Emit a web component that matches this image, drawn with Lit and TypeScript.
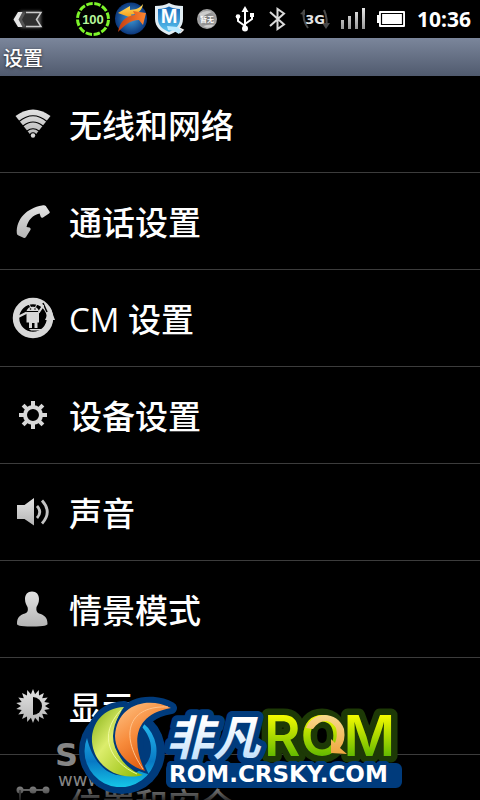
import { LitElement, html, css, svg, TemplateResult } from "lit";
import { customElement } from "lit/decorators.js";

interface Entry {
  label: string;
  icon: TemplateResult;
}

const gearTeeth = [0, 45, 90, 135, 180, 225, 270, 315];

const sunPoints = Array.from({ length: 36 }, (_, i) => {
  const r = i % 2 ? 12 : 17;
  const a = (i * Math.PI) / 18;
  return `${(24 + r * Math.sin(a)).toFixed(2)},${(24 - r * Math.cos(a)).toFixed(2)}`;
}).join(" ");

const entries: Entry[] = [
  {
    label: "无线和网络",
    icon: svg`
      <path d="M6.500 16Q24 3 41.500 16L24 38Z" fill="url(#g)"/>
      <g fill="none" stroke="#000" stroke-width="1.200">
        <path d="M10 21.500Q24 10 38 21.500"/><path d="M14 26Q24 18 34 26"/><path d="M18 31Q24 26.500 30 31"/>
      </g>
      <circle cx="24" cy="35.500" r="3.200" fill="#000"/><circle cx="24" cy="35.500" r="2.200" fill="#d8d8d8"/>`,
  },
  {
    label: "通话设置",
    icon: svg`<path d="M33 8.500C35 8 36 8.200 36.800 9L40.500 14.500C41 15.500 40.800 16 40 16.500L34 20.500C33 21 32 20.600 31.700 19.700L30.600 16.500C24 18 19 23 17.500 30L20.500 30.500C21.500 31 21.900 31.800 21.500 32.800L17 40C16.300 41 15.500 41.200 14.500 40.800L9.500 38.500C8.500 38 8 37.500 7.800 36C7 22 18 11 33 8.500Z" fill="url(#g)"/>`,
  },
  {
    label: "CM 设置",
    icon: svg`
      <circle cx="24" cy="24" r="17" fill="none" stroke="#d8d8d8" stroke-width="6.500"/>
      <path d="M36 26L41.500 14L46 26Z" fill="#d8d8d8"/>
      <path d="M34 9L38 18" stroke="#000" stroke-width="1.500"/>
      <g fill="#d8d8d8">
        <path d="M17.500 17A6.500 6 0 0 1 30 17Z"/>
        <path d="M17.500 18H30V28.500H28.500V34H25.500V29H23V34H20V28.500H17.500Z"/>
        <path d="M20 35H36L34 36.500H22Z"/>
      </g>
      <g stroke="#d8d8d8" stroke-width="2.200" stroke-linecap="round"><path d="M17 19L9 23M30 18L34 12"/></g>
      <path d="M20 10L21.500 13M28 10L26.500 13" stroke="#d8d8d8"/>
      <circle cx="21.500" cy="15" r=".800"/><circle cx="26" cy="15" r=".800"/>`,
  },
  {
    label: "设备设置",
    icon: svg`
      <circle cx="24" cy="24" r="8" fill="none" stroke="#d8d8d8" stroke-width="4"/>
      ${gearTeeth.map((a) => svg`<path d="M22 10H26V16H22Z" fill="#d8d8d8" transform=${`rotate(${a} 24 24)`}/>`)}`,
  },
  {
    label: "声音",
    icon: svg`
      <path d="M8 17H15.500L25 10V37.500L15.500 31H8Z" fill="url(#g)"/>
      <g fill="none" stroke="#c4c4c4" stroke-width="2.800"><path d="M28 18Q33.500 24 28 30"/><path d="M33 12.500Q43.500 24 33 35.500"/></g>`,
  },
  {
    label: "情景模式",
    icon: svg`<path d="M23 6.500C27.500 6.500 30 9.500 30 14C30 18 28.500 20 27.500 22C27 25 27.500 27.500 30 28.500C35 30 38.500 32 38.500 39C38.500 40 36 41.500 23 41.500C10 41.500 8 40 8 39C8 32 11 30 16 28.500C19 27.500 19.300 25 18.500 22C17.500 20 16 18 16 14C16 9.500 18.500 6.500 23 6.500Z" fill="url(#g)"/>`,
  },
  {
    label: "显示",
    icon: svg`
      <polygon points=${sunPoints} fill="url(#g)"/>
      <path d="M24 15A9 9 0 0 1 24 33Z" fill="#000"/>`,
  },
  {
    label: "位置和安全",
    icon: svg`
      <path d="M11 11H38" stroke="#ddd" stroke-width="2"/>
      <circle cx="11" cy="11" r="3.500" fill="#eee"/><circle cx="24" cy="11" r="3.500" fill="#eee"/><circle cx="37" cy="11" r="3.500" fill="#eee"/>
      <path d="M11 11V37H37" fill="none" stroke="#999" stroke-width="2"/>`,
  },
];

@customElement("status-bar")
class StatusBar extends LitElement {
  static styles = css`
    :host { display: flex; align-items: center; height: 38px; background: #000; color: #fff; }
    svg { display: block; width: 38px; height: 38px; flex: none; }
    .back { border: 0; padding: 0; margin-left: 8px; margin-right: 28px; background: none; }
    .push { margin-left: auto; }
    .narrow { width: 28px; }
    .clock { width: 63px; padding-left: 7px; font: 700 21px/38px "Noto Sans", "Open Sans", sans-serif; }
    .count { font: 700 13px "Liberation Sans", sans-serif; fill: #b6f59a; }
    .badge { font: 700 20px "Liberation Sans", sans-serif; fill: #fff; }
    .weather { font: 700 7px "Noto Sans CJK SC", sans-serif; fill: #fff; }
    .net { font: 700 13px "DejaVu Sans", sans-serif; fill: #e4e4e4; }
  `;
  render() {
    return html`
      <button class="back" aria-label="返回">
        <svg viewBox="0 0 38 38">
          <defs><filter id="b" x="-30%" y="-30%" width="160%" height="160%"><feGaussianBlur stdDeviation="1.500"/></filter></defs>
          <path d="M13 11H33V28H13L6 19.500Z" fill="#555" filter="url(#b)"/>
          <path d="M18 12H33L28.500 19.500L33 27H18L14 19.500Z" fill="#303030"/>
          <path d="M18 12.500H33L28.500 19.500L33 26.500H18" fill="none" stroke="#ccc" stroke-width="1.500"/>
          <path d="M10 12H14.500L10.500 19.500L14.500 27H10L5.500 19.500Z" fill="#e6e6e6"/>
        </svg>
      </button>
      <svg viewBox="0 0 38 38">
        <circle cx="19" cy="19" r="15.500" fill="none" stroke="#7df52a" stroke-width="3" stroke-dasharray="6.500 1.617" transform="rotate(3 19 19)"/>
        <text class="count" x="19" y="24" text-anchor="middle">100</text>
      </svg>
      <svg viewBox="0 0 38 38">
        <defs>
          <radialGradient id="o"><stop offset="0" stop-color="#3f9ad8"/><stop offset="1" stop-color="#0b377c"/></radialGradient>
          <linearGradient id="y" x2="0" y2="1"><stop stop-color="#ffe26a"/><stop offset="1" stop-color="#f59a12"/></linearGradient>
          <linearGradient id="r" x2="1" y2="0"><stop stop-color="#c33c12"/><stop offset="1" stop-color="#ff8730"/></linearGradient>
        </defs>
        <circle cx="19" cy="18.500" r="16" fill="url(#o)"/>
        <path d="M31 4C27 9 23 9.500 18 10L18 6L6 13L20 18L19 14.500C27 14 30 10 31 4Z" fill="url(#y)"/>
        <path d="M6 32C8 21 14 16 23 15L21 11L34 13L31 25L27 20C18 20 13 25 6 32Z" fill="url(#r)"/>
      </svg>
      <svg viewBox="0 0 38 38">
        <defs><linearGradient id="s" x2="0" y2="1"><stop stop-color="#1668b8"/><stop offset="1" stop-color="#5cc5f0"/></linearGradient></defs>
        <path d="M5 6Q14 6 19 3Q24 6 33 6V19C33 27 27 32 19 35C11 32 5 27 5 19Z" fill="#e2edf3"/>
        <path d="M8 9Q15 8.500 19 6.500Q23 8.500 30 9V19C30 25 26 29 19 32C12 29 8 25 8 19Z" fill="url(#s)"/>
        <text class="badge" x="19" y="23" text-anchor="middle">M</text>
        <path d="M17 26L27 27L32 30L29 34L24 31L18 30Z" fill="#bceaff"/><path d="M29 28L33 30L30 33" fill="none" stroke="#eee" stroke-width="1.500"/>
      </svg>
      <svg viewBox="0 0 38 38">
        <defs><radialGradient id="m"><stop offset="0" stop-color="#777"/><stop offset="1" stop-color="#a5a5a5"/></radialGradient></defs>
        <circle cx="19" cy="19" r="10" fill="url(#m)"/><path d="M11 14Q17 9 24 12Q18 14 13 18ZM15 26Q21 24 26 25Q21 30 15 26Z" fill="#ccc"/>
        <text class="weather" x="19" y="22" text-anchor="middle">暂无</text>
      </svg>
      <svg class="push narrow" viewBox="0 0 28 38">
        <g fill="none" stroke="#fff" stroke-width="2"><path d="M15 10V29M15 26L8 21V17M15 24L22 19V15"/></g>
        <path d="M15 6L18.500 12H11.500Z" fill="#fff"/><circle cx="15" cy="28.500" r="3" fill="#fff"/><circle cx="8" cy="16.500" r="2.300" fill="#fff"/><path d="M20 13H24V17H20Z" fill="#fff"/>
      </svg>
      <svg viewBox="0 0 38 38"><path d="M12 12L26 24.500L19.500 29V9L26 13.500L12 26" fill="none" stroke="#d9d9d9" stroke-width="2"/></svg>
      <svg viewBox="0 0 38 38">
        <path d="M8 10Q6 20 12 28M28 10Q32 19 30 27" fill="none" stroke="#4a4a4a" stroke-width="2"/>
        <path d="M4 14L9 9V15ZM26 23H34L30 29Z" fill="#4a4a4a"/>
        <text class="net" x="19" y="24" text-anchor="middle">3G</text>
      </svg>
      <svg viewBox="0 0 38 38">
        <defs><linearGradient id="l" x2="0" y2="1"><stop stop-color="#e8e8e8"/><stop offset="1" stop-color="#999"/></linearGradient></defs>
        <path d="M7 20H10V29H7ZM14 16H17V29H14ZM21 12H24V29H21ZM28 8H31V29H28Z" fill="url(#l)"/>
      </svg>
      <svg viewBox="0 0 38 38">
        <path d="M8 11H32Q33 11 33 12V26Q33 27 32 27H8Q7 27 7 26V23H5V15H7V12Q7 11 8 11Z" fill="#fff"/>
        <path d="M9.500 13.500H30.500V24.500H9.500Z" fill="#fff" stroke="#000" stroke-width="1.200"/>
      </svg>
      <time class="clock">10:36</time>
    `;
  }
}

@customElement("setting-row")
class SettingRow extends LitElement {
  static properties = { label: {}, icon: { attribute: false } };
  declare label: string;
  declare icon: TemplateResult;
  static styles = css`
    :host { display: block; border-bottom: 1px solid #3c3c3c; }
    .row {
      display: flex; align-items: center; gap: 12px; width: 100%; height: 96px; margin: 0; padding: 0 9px;
      border: 0; background: none; color: #fff; text-align: left;
      font: 500 33px/48px "Open Sans", "Noto Sans CJK SC", sans-serif;
    }
    .icon { width: 48px; height: 48px; flex: none; }
    .label { padding-top: 4px; }
  `;
  render() {
    return html`<button class="row">
      <svg class="icon" viewBox="0 0 48 48" aria-hidden="true">
        <defs><linearGradient id="g" x2="0" y2="1"><stop stop-color="#e4e4e4"/><stop offset="1" stop-color="#b4b4b4"/></linearGradient></defs>
        ${this.icon}
      </svg>
      <span class="label">${this.label}</span>
    </button>`;
  }
}

@customElement("site-logo")
class SiteLogo extends LitElement {
  static styles = css`
    :host { display: block; }
    svg { display: block; }
    .stamp { font: 700 32px "DejaVu Sans", sans-serif; fill: #858585; }
    .stamp-url { font: 400 18px "DejaVu Sans", sans-serif; fill: #858585; }
    .art { paint-order: stroke; stroke-linejoin: round; }
    .cn { font: italic 700 47px "Noto Sans CJK SC", sans-serif; stroke: #003b7c; stroke-width: 12px; }
    .rom { font: 600 56px Inter, sans-serif; stroke: #1d3906; stroke-width: 13px; }
    .url { font: 700 23px "DejaVu Sans", sans-serif; stroke: #003b7c; stroke-width: 8px; }
    .navy { fill: #003b7c; stroke: #003b7c; stroke-width: 12px; stroke-linejoin: round; }
  `;
  render() {
    const green = "M124 707C102 708 91 725 92 742C94 765 117 782 143 775C117 767 104 735 124 707Z";
    const orange = "M171 708C148 696 117 704 115 736C115 752 128 766 145 771C136 752 126 716 171 708Z";
    return html`<svg width="352" height="112" viewBox="54 688 352 112" role="img" aria-label="非凡ROM">
      <defs>
        <linearGradient id="gr" x2="1" y2="1"><stop stop-color="#7fac10"/><stop offset=".4" stop-color="#dced6c"/><stop offset="1" stop-color="#8db900"/></linearGradient>
        <linearGradient id="or" x2=".6" y2="1"><stop stop-color="#ffc78a"/><stop offset=".5" stop-color="#f78b3b"/><stop offset="1" stop-color="#d85208"/></linearGradient>
        <linearGradient id="cy" x2="0" y2="1"><stop stop-color="#25b9ee"/><stop offset=".6" stop-color="#0879c4"/><stop offset="1" stop-color="#15c6e8"/></linearGradient>
        <linearGradient id="wh" x2="0" y2="1"><stop offset=".3" stop-color="#fff"/><stop offset="1" stop-color="#b4dafa"/></linearGradient>
        <linearGradient id="li" x2="0" y2="1"><stop offset=".2" stop-color="#f3fa00"/><stop offset=".8" stop-color="#62b800"/></linearGradient>
        <linearGradient id="go" x2="0" y2="1"><stop stop-color="#f8d98c"/><stop offset="1" stop-color="#f0a640"/></linearGradient>
      </defs>
      <text class="stamp" x="55" y="766">S</text>
      <text class="stamp-url" x="58" y="786">www.</text>
      <circle cx="122" cy="751" r="43" fill="#003b7c"/>
      <path class="navy" d=${green}/><path class="navy" d=${orange}/>
      <path d="M87 738A36 36 0 1 0 143 723L141 726C155 740 155 762 137 772C115 783 94 768 87 738Z" fill="url(#cy)"/>
      <path d=${green} fill="url(#gr)"/>
      <path d="M121 710C97 735 110 762 137 774" fill="none" stroke="#eefa9c" stroke-width="1"/>
      <path d=${orange} fill="url(#or)" stroke="#003b7c" stroke-width="4" paint-order="stroke"/>
      <path d="M168 707C130 705 118 733 143 769" fill="none" stroke="#ffc48d" stroke-width="1"/>
      <path class="navy" d="M172 769H396V782H172Z"/>
      <text class="art rom" x="264" y="756" fill="url(#li)">ROM</text>
      <path d="M306 728C313 710 338 711 344 729Q346 741 340 748L347 754L331 753L331 739L335 743Q338 736 336 728C330 718 320 719 313 729Z" fill="url(#go)"/>
      <text class="art cn" x="166" y="755" fill="url(#wh)">非凡</text>
      <text class="art url" x="169" y="782" fill="#fff">ROM.CRSKY.COM</text>
    </svg>`;
  }
}

@customElement("app-root")
class AppRoot extends LitElement {
  static styles = css`
    :host {
      display: flex; flex-direction: column; position: relative; height: 100vh; overflow: hidden;
      background: #000; color: #fff; font-family: "Noto Sans", "Noto Sans CJK SC", sans-serif;
    }
    .title {
      flex: none; height: 38px; margin: 0; padding: 0 3px; box-sizing: border-box;
      font: 500 20px/40px "Noto Sans CJK SC", sans-serif; text-shadow: 0 1px 3px #222;
      background: linear-gradient(#7b869b, #505a6e);
    }
    .list { flex: 1; min-height: 0; overflow: hidden; margin: 0; padding: 0; list-style: none; }
    .fade { position: absolute; left: 0; right: 0; bottom: 0; height: 32px; background: linear-gradient(transparent, #000000d0); }
    .logo { position: absolute; left: 54px; bottom: 0; }
  `;
  render() {
    return html`
      <status-bar></status-bar>
      <h1 class="title">设置</h1>
      <ul class="list">
        ${entries.map((e) => html`<li><setting-row .label=${e.label} .icon=${e.icon}></setting-row></li>`)}
      </ul>
      <div class="fade"></div>
      <site-logo class="logo"></site-logo>
    `;
  }
}
